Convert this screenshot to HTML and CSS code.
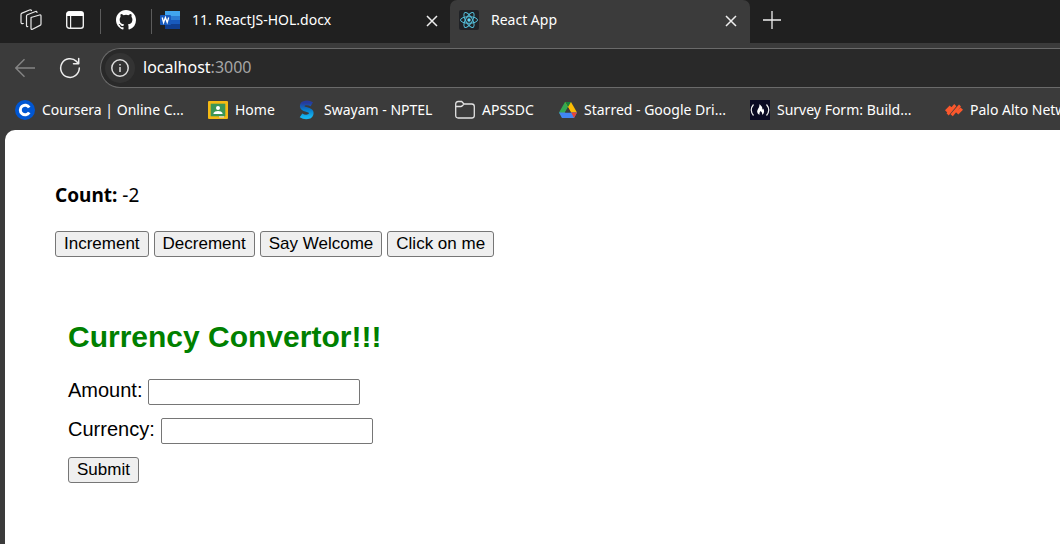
FILE: index.html
```html
<!DOCTYPE html>
<html lang="en">
<head>
<meta charset="utf-8">
<title>React App</title>
<link rel="stylesheet" href="styles.css">
</head>
<body>
<header class="browser">
  <div class="tabbar">
    <div class="tools">
      <button class="tool" aria-label="Workspaces"><svg width="22" height="22" viewBox="0 0 22 22" fill="none" stroke="#e8e8e8" stroke-width="1.200" stroke-linejoin="round" stroke-linecap="round"><path d="M11 8.500 19.500 6q1.500-.3 1.500 1v8q0 1-1 1.400l-7.500 3.800q-1.500.6-1.500-1V9.500q0-.8.7-1.200z"/><path d="M7.800 17.500q-1.300.3-1.300-1V7q0-.8.8-1.200l8.200-3.300q1.200-.3 1.500.8"/><path d="M3.300 14.500Q1 15 1 13.300V5.500q0-1 1-1.400L9.500 1q1.500-.5 2 .5"/></svg></button>
      <button class="tool" aria-label="Tab actions"><svg width="20" height="20" viewBox="0 0 20 20"><rect x="1.700" y="1.700" width="16.600" height="16.600" rx="2.500" fill="none" stroke="#eee" stroke-width="1.400"/><path d="M1.500 6V4q0-2.500 2.500-2.500h12q2.500 0 2.500 2.500v2z" fill="#fff"/><path d="M5.600 6v12" stroke="#eee" stroke-width="1.200"/></svg></button>
    </div>
    <button class="pinned" aria-label="GitHub"><svg width="20" height="20" viewBox="0 0 16 16" fill="#fff"><path d="M8 0C3.580 0 0 3.580 0 8c0 3.540 2.290 6.530 5.470 7.590.4.070.55-.17.55-.38 0-.19-.01-.82-.01-1.490-2.010.37-2.530-.49-2.690-.94-.09-.23-.48-.94-.82-1.130-.28-.15-.68-.52-.01-.53.63-.01 1.080.58 1.230.82.72 1.210 1.870.87 2.330.66.07-.52.28-.87.51-1.070-1.780-.2-3.640-.89-3.640-3.950 0-.87.31-1.590.82-2.150-.08-.2-.36-1.020.08-2.120 0 0 .67-.21 2.200.82a7.600 7.600 0 0 1 4 0c1.530-1.040 2.200-.82 2.200-.82.44 1.100.16 1.920.08 2.120.51.56.82 1.270.82 2.150 0 3.070-1.870 3.750-3.650 3.950.29.25.54.73.54 1.480 0 1.070-.01 1.930-.01 2.200 0 .21.15.46.55.38A8 8 0 0 0 16 8c0-4.420-3.580-8-8-8z"/></svg></button>
    <div class="tab">
      <svg width="20" height="20" viewBox="0 0 20 20"><path d="M5 1h15v5H5z" fill="#41a5ee"/><path d="M5 6h15v4H5z" fill="#2b7cd3"/><path d="M5 10h15v4H5z" fill="#185abd"/><path d="M5 14h15v5H5z" fill="#103f91"/><rect y="5" width="11" height="10" rx="1" fill="#185abd"/><path d="m2.200 7.500 1.400 5 1.800-5 1.800 5 1.500-5" fill="none" stroke="#fff" stroke-width="1.300"/></svg>
      <span class="tab-title">11. ReactJS-HOL.docx</span>
      <button class="close" aria-label="Close tab"><svg width="12" height="12" viewBox="0 0 12 12" stroke="#eee" stroke-width="1.500"><path d="m1 1 10 10M11 1 1 11"/></svg></button>
    </div>
    <div class="tab active">
      <svg width="20" height="20" viewBox="0 0 20 20"><rect width="20" height="20" rx="2" fill="#202226"/><g fill="none" stroke="#54bfdb" stroke-width="1"><ellipse cx="10" cy="10" rx="8.500" ry="3.300"/><ellipse cx="10" cy="10" rx="8.500" ry="3.300" transform="rotate(60 10 10)"/><ellipse cx="10" cy="10" rx="8.500" ry="3.300" transform="rotate(120 10 10)"/></g><circle cx="10" cy="10" r="1.700" fill="#61dafb"/></svg>
      <span class="tab-title">React App</span>
      <button class="close" aria-label="Close tab"><svg width="12" height="12" viewBox="0 0 12 12" stroke="#eee" stroke-width="1.500"><path d="m1 1 10 10M11 1 1 11"/></svg></button>
    </div>
    <button class="new-tab" aria-label="New tab"><svg width="18" height="18" viewBox="0 0 18 18" stroke="#eee" stroke-width="1.300"><path d="M9 0v18M0 9h18"/></svg></button>
  </div>
  <div class="navbar">
    <button class="nav" aria-label="Back"><svg width="20" height="20" viewBox="0 0 20 20" fill="none" stroke="#858585" stroke-width="1.400"><path d="M20 10H.8M9.500 1.300.8 10l8.700 8.700"/></svg></button>
    <button class="nav" aria-label="Refresh"><svg width="22" height="22" viewBox="0 0 22 22" fill="none" stroke="#eee" stroke-width="1.500" stroke-linecap="round" stroke-linejoin="round"><path d="M20.300 11A9.300 9.300 0 1 1 17.500 4.400L19.500 6.500M19.700 1.500v5.200h-5.200"/></svg></button>
    <div class="address">
      <button class="info" aria-label="Site information"><svg width="18" height="18" viewBox="0 0 18 18" fill="none" stroke="#ddd" stroke-width="1.500"><circle cx="9" cy="9" r="8.200"/><path d="M9 8v5M9 5v1.600"/></svg></button>
      <span class="url">localhost<span class="port">:3000</span></span>
    </div>
  </div>
  <nav class="bookmarks" aria-label="Favorites">
    <a href="#"><svg width="20" height="20" viewBox="0 0 20 20"><circle cx="10" cy="10" r="10" fill="#0056d2"/><path d="M14.200 7.500A4.800 4.800 0 1 0 14.200 12.500" fill="none" stroke="#fff" stroke-width="3"/></svg>Coursera | Online C...</a>
    <a href="#"><svg width="20" height="20" viewBox="0 0 20 20"><rect y="1" width="20" height="18" rx="1" fill="#f5ba14"/><rect x="2.700" y="3.700" width="14.600" height="12.600" fill="#3c9657"/><circle cx="10" cy="8" r="2" fill="#fff"/><path d="M5.500 14v-1Q6.500 11 10 11t4.500 2v1z" fill="#fff"/><path d="M11 16.300h5v1.200h-5z" fill="#ddd"/></svg>Home</a>
    <a href="#"><svg class="narrow" width="16" height="20" viewBox="0 0 16 20"><defs><linearGradient id="swayam" x2="0" y2="1"><stop stop-color="#263a9c"/><stop offset=".5" stop-color="#087dcc"/><stop offset="1" stop-color="#16b5ef"/></linearGradient></defs><path d="M12.800 4.300C9 2 3 2.500 3.200 6.300C3.500 10.500 12.300 8.500 12.300 13C12.300 17.500 6 18 2 15.300" fill="none" stroke="url(#swayam)" stroke-width="4.600"/></svg>Swayam - NPTEL</a>
    <a href="#"><svg width="20" height="20" viewBox="0 0 20 20" fill="none" stroke="#e2e2e2" stroke-width="1.300"><path d="M.7 4q0-2.500 2.500-2.500h3.500L9 4h7.800q2.500 0 2.500 2.500v9q0 2.500-2.500 2.500H3.200Q.7 18 .7 15.500zM.7 6.500h5Q7 6.500 9 4"/></svg>APSSDC</a>
    <a href="#"><svg width="18" height="20" viewBox="0 0 18 20"><path d="M6 2h6L3 17.500l-3-5z" fill="#34a853"/><path d="M6 2h6l6 10.500h-6z" fill="#fbbc04"/><path d="M6 2h6L9 7z" fill="#188038"/><path d="M0 12.500h18L15 18H3z" fill="#4285f4"/><path d="M12.200 12.500H18L15 18z" fill="#ea4335"/><path d="m9 7.300 3 5.200H6z" fill="#3b3b3b"/></svg>Starred - Google Dri...</a>
    <a href="#"><svg width="20" height="20" viewBox="0 0 20 20"><path fill="#0a0a23" d="M0 0h20v20H0z"/><path d="M3.500 4.500Q-1 10 3.500 15.500M16.500 4.500q4.500 5.500 0 11" fill="none" stroke="#eee" stroke-width="1.200"/><path d="M9.500 4q3 2.500 3 5.500.7 0 .7-1 2.300 4-1.200 6.500.8-2.500-1.500-4-1.500 2-1 4-3.800-2-1.500-6 1.700-2 1.500-5z" fill="#fff"/></svg>Survey Form: Build...</a>
    <a href="#"><svg width="18" height="20" viewBox="0 0 18 20" fill="#fa582d"><path d="m4.700 5.500 2.300 2.300-4.700 4.700L0 10.200zM9.200 4l2.200 2.200-7.700 9.300-2.200-2.200zM14 4.500l2 2-8.200 9.700-2.300-2zM15.500 7.500 18 9.800l-4.700 4.700-2.300-2.300z"/></svg>Palo Alto Networks</a>
  </nav>
</header>
<main class="page">
  <p class="count"><b>Count:</b> -2</p>
  <div class="actions">
    <button class="btn">Increment</button>
    <button class="btn">Decrement</button>
    <button class="btn">Say Welcome</button>
    <button class="btn">Click on me</button>
  </div>
  <form class="convertor">
    <h1>Currency Convertor!!!</h1>
    <div class="field"><label for="amount">Amount:</label><input id="amount" type="text"></div>
    <div class="field"><label for="currency">Currency:</label><input id="currency" type="text"></div>
    <button class="btn" type="button">Submit</button>
  </form>
</main>
</body>
</html>
```
FILE: styles.css
```css
* { box-sizing: border-box; }
body {
  margin: 0;
  min-height: 100vh;
  display: flex;
  flex-direction: column;
  overflow-x: hidden;
  background: #3b3b3b;
  font-family: "Noto Sans", "Open Sans", sans-serif;
}
button { border: 0; background: none; padding: 0; }
svg { display: block; flex: none; }
.browser { color: #fff; font-size: 14px; overflow: hidden; }
.tabbar { display: flex; height: 43px; background: #202020; }
.tools { display: flex; align-items: center; gap: 23px; width: 100px; padding-left: 20px; padding-bottom: 3px; }
.pinned {
  display: flex;
  align-items: center;
  justify-content: center;
  width: 52px;
  height: 25px;
  margin-top: 9px;
  padding-bottom: 4px;
  border: solid #5c5c5c;
  border-width: 0 1px;
}
.tab {
  display: flex;
  align-items: center;
  width: 298px;
  padding: 0 12px 3px 8px;
}
.tab.active { width: 300px; padding-left: 9px; padding-right: 13px; background: #3b3b3b; border-radius: 7px 7px 0 0; }
.tab-title { flex: 1; padding-left: 12px; line-height: 20px; }
.close { padding-top: 2px; }
.new-tab { padding: 0 13px 4px; }
.navbar { display: flex; align-items: center; padding: 5px 0 2px 15px; }
.nav { width: 44px; }
.nav + .nav { width: 41px; }
.address {
  flex: 1;
  display: flex;
  align-items: center;
  gap: 8px;
  height: 40px;
  padding-left: 4px;
  background: #292929;
  border: 1px solid #6a6a6a;
  border-right: 0;
  border-radius: 20px 0 0 20px;
}
.info {
  display: flex;
  align-items: center;
  justify-content: center;
  width: 30px;
  height: 30px;
  border-radius: 50%;
  background: #333;
}
.url { padding-bottom: 2px; font-size: 16px; }
.port { color: #a5a5a5; }
.bookmarks {
  display: grid;
  grid-template-columns: 193px 91px 156px 104px 191px 195px auto;
  height: 40px;
  padding: 0 0 1px 15px;
  white-space: nowrap;
}
.bookmarks a {
  display: flex;
  align-items: center;
  gap: 7px;
  color: #fff;
  text-decoration: none;
}
.bookmarks .narrow { margin-right: 2px; }
.page {
  flex: 1;
  margin-left: 5px;
  padding: 50px;
  background: #fff;
  border-radius: 10px 0 0 0;
  font-size: 19px;
}
.count { margin: 0 0 21px; line-height: 30px; }
.actions { display: flex; gap: 5px; }
.btn {
  height: 26px;
  padding: 0 8px;
  font: 17px "Liberation Sans", Arial, sans-serif;
  line-height: 22px;
  color: #000;
  background: #efefef;
  border: 1px solid #767676;
  border-radius: 3px;
}
.convertor {
  padding: 60px 13px 0;
  font: 20px "Liberation Sans", Arial, sans-serif;
}
.convertor h1 { margin: 0 0 22px; font-size: 30px; line-height: 40px; color: #008000; }
.field { display: flex; align-items: flex-start; gap: 6px; margin-bottom: 13px; }
.field label { line-height: 22px; }
.field input {
  width: 212px;
  height: 26px;
  padding: 1px 2px;
  font: inherit;
  border: 1px solid #767676;
  border-radius: 2px;
}
```
